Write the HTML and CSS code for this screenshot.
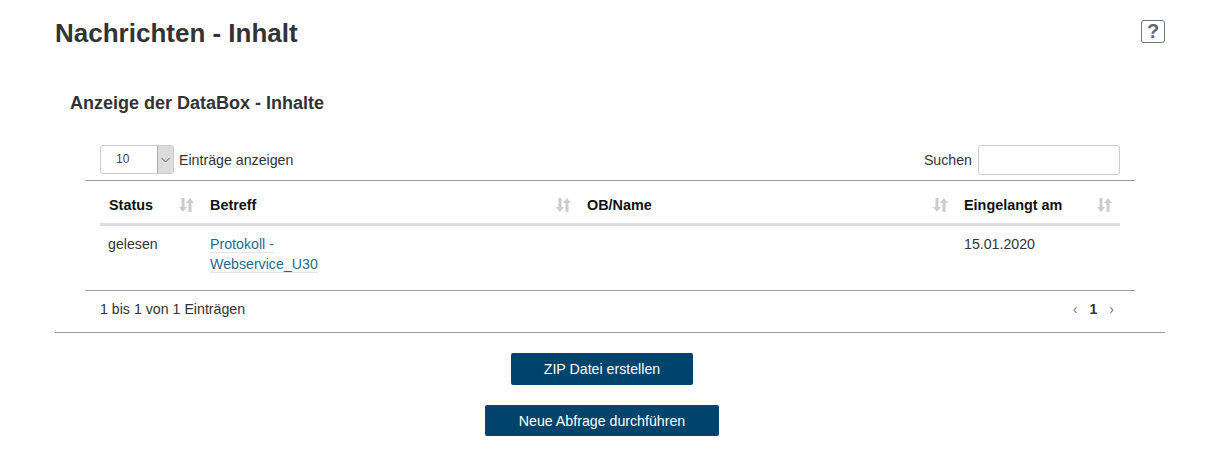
FILE: index.html
```html
<!DOCTYPE html>
<html lang="de">
<head>
<meta charset="utf-8">
<title>Nachrichten - Inhalt</title>
<link rel="stylesheet" href="styles.css">
</head>
<body>
<main class="page">
  <header class="page-head">
    <h1>Nachrichten - Inhalt</h1>
    <a class="help" href="#">?</a>
  </header>
  <h2>Anzeige der DataBox - Inhalte</h2>
  <section class="box">
    <div class="controls">
      <label class="length">
        <span class="select"><span class="select-value">10</span><span class="select-btn"><svg width="9" height="6" viewBox="0 0 9 6"><path d="M.5 1l4 4 4-4" fill="none" stroke="#555" stroke-width="1"/></svg></span></span>
        Einträge anzeigen
      </label>
      <label class="search">Suchen <input type="text"></label>
    </div>
    <div class="table-wrap">
      <table>
        <colgroup><col class="c1"><col class="c2"><col class="c3"><col class="c4"></colgroup>
        <thead>
          <tr>
            <th class="first"><span>Status</span><svg class="sort" viewBox="0 0 15 14"><path d="M2.500 0h3v9h2.500l-4 5-4-5h2.500z M9.500 14h3V5H15L11 0 7 5h2.500z" fill="#ccc"/></svg></th>
            <th><span>Betreff</span><svg class="sort" viewBox="0 0 15 14"><path d="M2.500 0h3v9h2.500l-4 5-4-5h2.500z M9.500 14h3V5H15L11 0 7 5h2.500z" fill="#ccc"/></svg></th>
            <th><span>OB/Name</span><svg class="sort" viewBox="0 0 15 14"><path d="M2.500 0h3v9h2.500l-4 5-4-5h2.500z M9.500 14h3V5H15L11 0 7 5h2.500z" fill="#ccc"/></svg></th>
            <th><span>Eingelangt am</span><svg class="sort" viewBox="0 0 15 14"><path d="M2.500 0h3v9h2.500l-4 5-4-5h2.500z M9.500 14h3V5H15L11 0 7 5h2.500z" fill="#ccc"/></svg></th>
          </tr>
        </thead>
        <tbody>
          <tr>
            <td class="first">gelesen</td>
            <td><a href="#">Protokoll -</a><br><a href="#">Webservice_U30</a></td>
            <td></td>
            <td>15.01.2020</td>
          </tr>
        </tbody>
      </table>
    </div>
    <div class="info-row">
      <span>1 bis 1 von 1 Einträgen</span>
      <nav class="pager"><span class="arrow">‹</span><b>1</b><span class="arrow">›</span></nav>
    </div>
  </section>
  <div class="actions">
    <button class="btn btn-zip" type="button">ZIP Datei erstellen</button>
    <button class="btn btn-new" type="button">Neue Abfrage durchführen</button>
  </div>
</main>
</body>
</html>
```
FILE: styles.css
```css
* { box-sizing: border-box; }
html, body { margin: 0; padding: 0; background: #fff; }
body {
  font-family: "Liberation Sans", Arial, sans-serif;
  font-size: 14.2px;
  color: #333;
  height: 455px;
  overflow: hidden;
}
.page { margin: 0 43px 0 55px; padding-top: 18px; }
.page-head { display: flex; justify-content: space-between; align-items: flex-start; height: 30px; }
h1 { margin: 0; font-size: 26px; line-height: 30px; font-weight: 700; color: #333; }
.help {
  margin-top: 2px;
  width: 24px; height: 23px;
  border: 1.5px solid #6b7280;
  border-radius: 3px;
  color: #5f6675;
  font-size: 20px; line-height: 21px; font-weight: 700;
  text-align: center; text-decoration: none;
}
h2 { margin: 45px 0 0 15px; font-size: 18px; line-height: 20px; font-weight: 700; color: #333; }
.box { margin: 33px 30px 0; }
.controls {
  display: flex; justify-content: space-between; align-items: center;
  height: 35px; padding: 0 15px 7px;
  border-bottom: 1px solid #999;
}
.length { display: flex; align-items: center; gap: 5px; }
.select {
  display: flex; width: 74px; height: 29px;
  border: 1px solid #ccc; border-radius: 3px; overflow: hidden;
}
.select-value { flex: 1; padding-left: 15px; font-size: 12px; line-height: 27px; color: #444; }
.select-btn {
  width: 16px; background: #dcdcdc; border-left: 1px solid #aaa;
  display: flex; align-items: center; justify-content: center;
}
.search { display: flex; align-items: center; gap: 6px; }
.search input {
  width: 142px; height: 30px; margin: 0; padding: 0 6px;
  border: 1px solid #ccc; border-radius: 3px; background: #fff;
}
.table-wrap { padding: 0 15px; border-bottom: 1px solid #999; }
table { width: 1020px; border-collapse: collapse; table-layout: fixed; }
.c1 { width: 102px; } .c2 { width: 377px; } .c3 { width: 377px; } .c4 { width: 164px; }
th {
  height: 43px; padding: 6px 8px 0; position: relative;
  font-size: 14.4px; font-weight: 700; color: #111; text-align: left;
  border-bottom: 3px solid #ddd;
}
th span { display: block; }
th.first { padding-left: 9px; }
.sort { position: absolute; right: 8px; top: 17px; width: 15px; height: 14px; }
td { padding: 8px 8px 0; height: 66px; vertical-align: top; line-height: 20px; font-size: 14.2px; }
td.first { padding-left: 8px; }
a { color: #1f6a8f; text-decoration: none; border-bottom: 1px solid #e4e4e4; }
.info-row {
  display: flex; justify-content: space-between; align-items: center;
  height: 36px; padding: 0 21px 0 15px; margin-bottom: 5px;
}
.pager { display: flex; gap: 12px; align-items: center; color: #333; font-size: 14px; }
.pager .arrow { color: #777; }
.actions {
  border-top: 1px solid #999;
  display: flex; flex-direction: column; align-items: center; gap: 20px;
  padding-top: 20px; padding-right: 16px;
}
.btn {
  height: 32px; border: 0; border-radius: 2px;
  background: #00446b; color: #fff;
  font: 14.2px "Liberation Sans", Arial, sans-serif;
}
.btn-zip { width: 182px; }
.btn-new { width: 234px; height: 31px; }
```
